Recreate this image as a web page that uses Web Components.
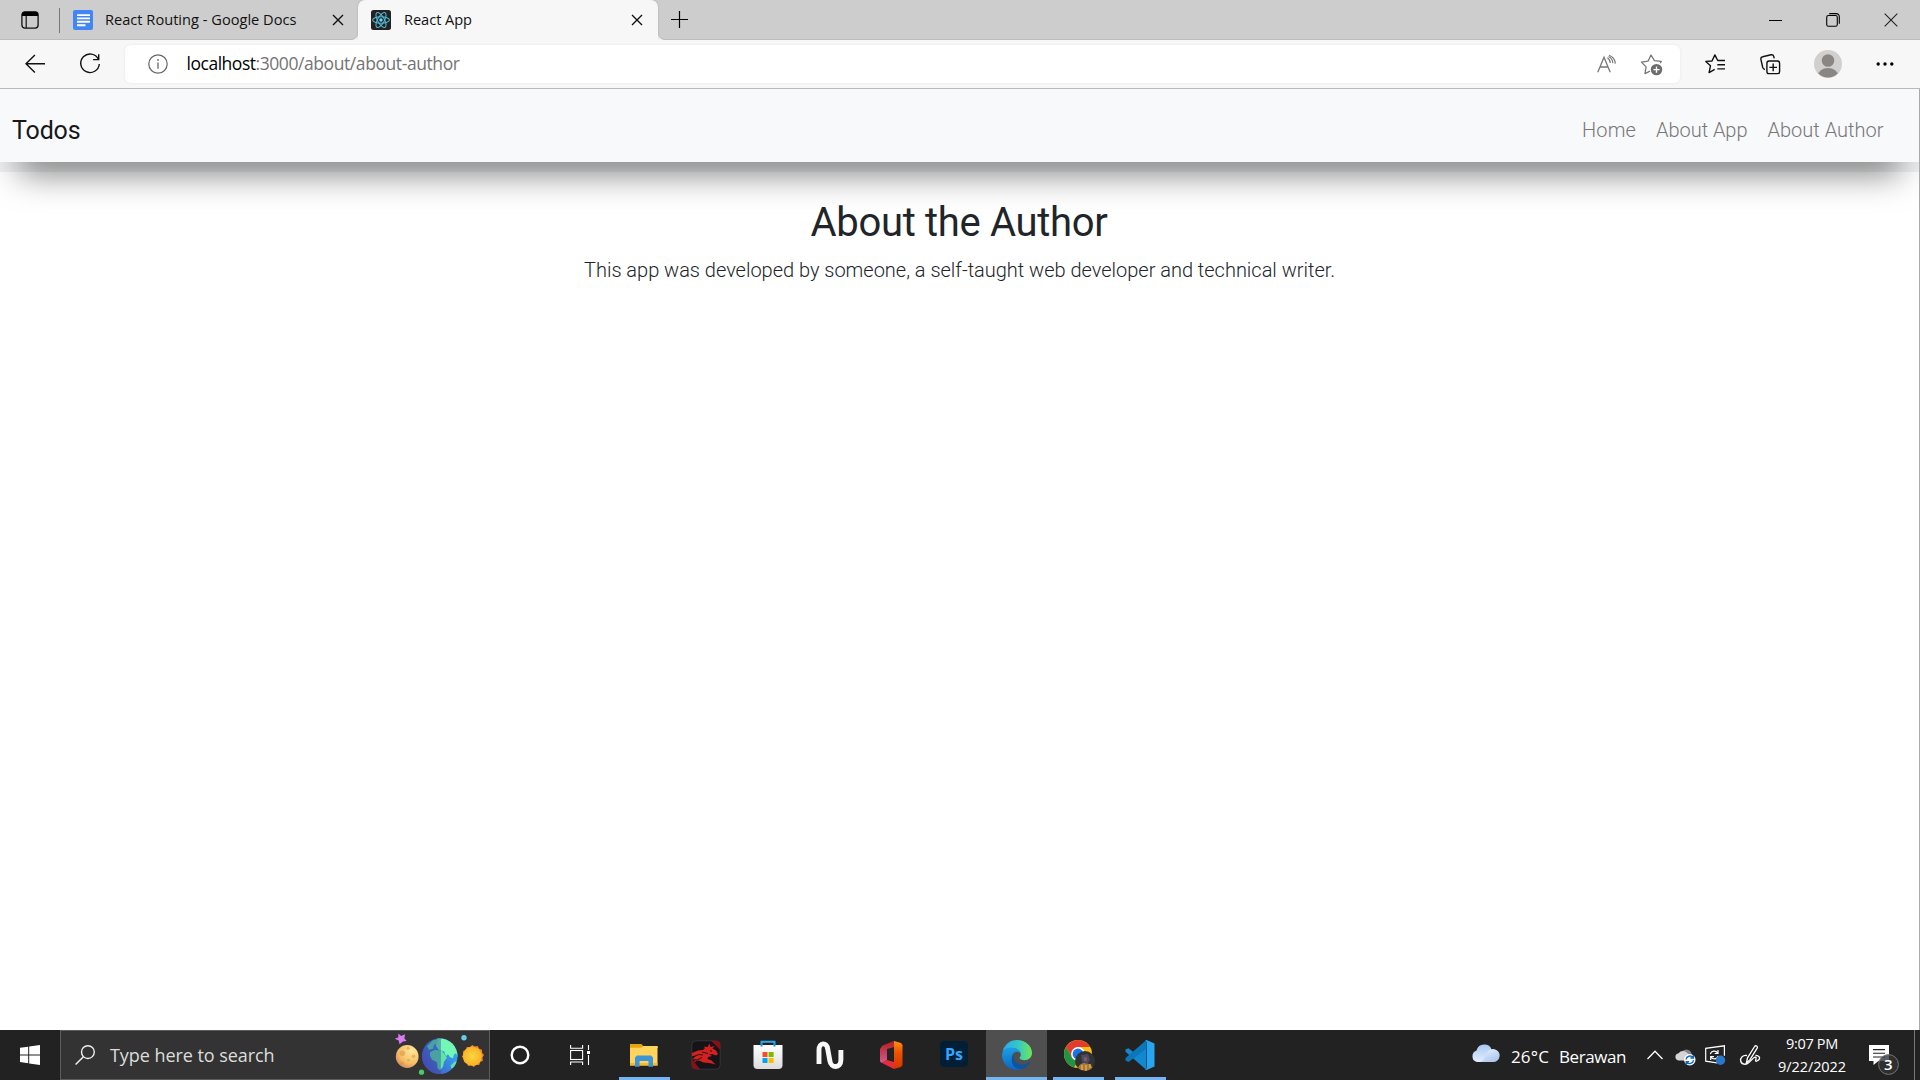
<!DOCTYPE html>
<html lang="en">
<head>
<meta charset="utf-8">
<title>React App</title>
<style>
html,body{margin:0;padding:0;height:100%;overflow:hidden;background:#fff}
</style>
</head>
<body>
<desktop-screen>
  <browser-window slot="window">
    <todo-navbar brand="Todos">
      <fit-text w="54">Home</fit-text>
      <fit-text w="91.5">About App</fit-text>
      <fit-text w="116">About Author</fit-text>
    </todo-navbar>
    <about-page>
      <span slot="title">About the Author</span>
      <span slot="text">This app was developed by someone, a self-taught web developer and technical writer.</span>
    </about-page>
  </browser-window>
  <task-bar slot="taskbar"></task-bar>
</desktop-screen>
<script>
const ICONS = {
tabs:[18,18,`<rect x=".9" y=".9" width="16.2" height="16.2" rx="3" fill="none" stroke="#111" stroke-width="1.3"/><path d="M1 5V3.6A2.8 2.8 0 0 1 3.8.8h10.4A2.8 2.8 0 0 1 17 3.6V5z" fill="#000"/><path d="M5.2 5v12" stroke="#111" stroke-width="1.2"/>`],
docs:[20,20,`<rect width="20" height="20" rx="2" fill="#4285f4"/><path d="M4 5.1h13M4 8.4h13M4 11.8h13M4 15.2h8.5" stroke="#fff" stroke-width="1.9"/>`],
react:[20,20,`<rect width="20" height="20" rx="2.5" fill="#222"/><g fill="none" stroke="#53b9d5" stroke-width="1.05"><ellipse cx="10" cy="10" rx="8.4" ry="3.3"/><ellipse cx="10" cy="10" rx="8.4" ry="3.3" transform="rotate(60 10 10)"/><ellipse cx="10" cy="10" rx="8.4" ry="3.3" transform="rotate(120 10 10)"/></g><circle cx="10" cy="10" r="1.7" fill="#61dafb"/>`],
x:[12,12,`<path d="M1 1l10 10M11 1L1 11" stroke="#111" stroke-width="1.4"/>`],
plus:[18,18,`<path d="M8.5 0v17M0 8.5h17" stroke="#000" stroke-width="1.2"/>`],
min:[13,13,`<path d="M0 6.5h13" stroke="#000" stroke-width="1"/>`],
max:[14,14,`<rect x=".7" y="2.5" width="10.6" height="10.8" rx="1.8" fill="none" stroke="#000" stroke-width="1.1"/><path d="M3.2.6h7A3 3 0 0 1 13.3 3.6v7.2" fill="none" stroke="#000" stroke-width="1.1"/>`],
close:[14,14,`<path d="M.7.7l12.6 12.6M13.3.7L.7 13.3" stroke="#222" stroke-width="1.1"/>`],
back:[20,20,`<path d="M20 9.7H1M9.9 .9L1 9.7l8.9 8.8" fill="none" stroke="#111" stroke-width="1.4"/>`],
reload:[20,20,`<path d="M18.4 5.2A9.3 9.3 0 1 0 19.3 10" fill="none" stroke="#111" stroke-width="1.4"/><path d="M18.7.2v5.4h-5.6" fill="none" stroke="#111" stroke-width="1.4"/>`],
info:[20,20,`<circle cx="10" cy="10" r="9.2" fill="none" stroke="#666" stroke-width="1.2"/><path d="M10 8.4v6.4" stroke="#666" stroke-width="1.3"/><circle cx="10" cy="5.9" r=".9" fill="#666"/>`],
read:[20,20,`<path d="M.8 18.2L7 3.2l6.2 15M2.8 13h8.4" fill="none" stroke="#777" stroke-width="1.3"/><path d="M10.4 3.8a6.500 6.500 0 0 1 2.900 5.300M12 1.200a9.500 9.500 0 0 1 6.300 8.400" fill="none" stroke="#777" stroke-width="1.200"/><path d="M11.500 2.600a8 8 0 0 1 4.400 6.700" fill="none" stroke="#777" stroke-width="1.100"/>`],
addstar:[23,22,`<path d="M20.3 9.1l1-1.8-6.9-.7L11 1 8 7.2 1.4 8.1l4.7 4.8-1.1 6.8 5-2.6" fill="none" stroke="#777" stroke-width="1.3" stroke-linejoin="round"/><circle cx="16.5" cy="15.6" r="5.7" fill="#6c6c6c"/><path d="M16.5 12.5v6.2M13.4 15.6h6.2" stroke="#fff" stroke-width="1.4"/>`],
fav:[21,20,`<path d="M20 6.5h-7.3L9.9.9 7 7 .8 7.4l4.7 4.3-1.4 6.9 5.6-3.3" fill="none" stroke="#111" stroke-width="1.4" stroke-linejoin="round"/><path d="M12.3 10.7H20M12.3 14.9H20" stroke="#111" stroke-width="1.4"/>`],
coll:[21,21,`<rect x="6.9" y="7" width="12.7" height="12.6" rx="2.2" fill="none" stroke="#111" stroke-width="1.4"/><path d="M13.2 9.6v7.6M9.4 13.4H17M4.9 15.5A3 3 0 0 1 2.6 13L.9 5.3a2.3 2.3 0 0 1 1.8-2.5L11 .8a2.4 2.4 0 0 1 2.8 1.8l.4 1.8" fill="none" stroke="#111" stroke-width="1.4"/>`],
avatar:[28,28,`<defs><clipPath id="c"><circle cx="14" cy="14" r="13.6"/></clipPath></defs><circle cx="14" cy="14" r="14" fill="#d2d0ce"/><circle cx="14" cy="10.5" r="6.3" fill="#8a8683"/><ellipse cx="14" cy="26" rx="10.2" ry="8" fill="#8a8683" clip-path="url(#c)"/>`],
dots:[18,4,`<circle cx="2.2" cy="2" r="1.7"/><circle cx="9" cy="2" r="1.7"/><circle cx="15.8" cy="2" r="1.7"/>`],
win:[20,20,`<path d="M0 2.8L8.2 1.7v7.7H0zM9.2 1.5L20 0v9.4H9.2zM0 10.4h8.2v7.8L0 17.1zM9.2 10.4H20V20L9.2 18.4z" fill="#fff"/>`],
search:[20,20,`<circle cx="12.9" cy="7.1" r="6.4" fill="none" stroke="#eee" stroke-width="1.4"/><path d="M8.4 11.7L.6 19.5" stroke="#eee" stroke-width="1.5"/>`],
planets:[92,44,`<defs><radialGradient id="m" cx=".7" cy=".25" r=".95"><stop offset="0" stop-color="#ffe79b"/><stop offset=".6" stop-color="#f5bd62"/><stop offset="1" stop-color="#c9706a"/></radialGradient><linearGradient id="e" x1=".1" y1=".9" x2="1" y2=".3"><stop offset="0" stop-color="#5a4dc0"/><stop offset=".45" stop-color="#3c78d8"/><stop offset="1" stop-color="#31b0f8"/></linearGradient><radialGradient id="s"><stop offset="0" stop-color="#fcd53f"/><stop offset="1" stop-color="#f7b325"/></radialGradient><clipPath id="g"><circle cx="45.7" cy="26" r="17.8"/></clipPath></defs>
<g transform="translate(0 -2.8)"><path d="M4.2 3.2l3 2.7L11 4l-.6 4.200 2.200 2.600-3.700.4L5.500 14 4.700 10.300.8 8.600l3.700-1.500z" fill="#dc7cf5"/>
<circle cx="13.200" cy="26.300" r="11.400" fill="url(#m)"/><g fill="#d99545" opacity=".55"><circle cx="8.400" cy="23" r="2.700"/><circle cx="14" cy="18" r="1.500"/><circle cx="19.500" cy="26" r="1.800"/><circle cx="14.500" cy="30" r="1.300"/><circle cx="8" cy="33" r="2"/></g>
<circle cx="45.700" cy="26" r="17.800" fill="url(#e)"/><g clip-path="url(#g)"><path d="M43 7h12l12 10v12l-3-2-2-4-2 1-1 4-3-1-2-3-2 2-2-5-5-1-3-4z" fill="#72f7b4"/><path d="M33 16l6-6 5-.5-1 4-3 1-1 4-4 1zM36 22l5-2.500 7 1 3 4 2 3-3 4-1 5-3 3.500-2.500-2-.5-6-5-2.500-2-4z" fill="#5fe3a6"/><path d="M57 35l4-4 3 1-3 5-4 1z" fill="#62dfb0"/><path d="M46.900 6H25v42h21.900z" fill="#30459c" opacity=".42"/></g>
<path d="M78.300 14.800l2.500 1.600 3-.6 1.300 2.700 2.900 1 0 3 2 2.400-1.600 2.600.5 3-2.700 1.300-1 2.900-3 0-2.400 2-2.600-1.600-3 .6-1.300-2.800-2.900-1-.1-3-2-2.400 1.700-2.500-.6-3 2.800-1.400 1-2.800 3-.1z" fill="#f48526"/><circle cx="78.300" cy="26" r="9.500" fill="url(#s)"/>
<circle cx="70" cy="7.500" r="2.700" fill="#62cfe8"/><circle cx="27.500" cy="42" r="2.600" fill="#47cc68"/></g>`],
cortana:[20,20,`<circle cx="10" cy="10" r="8.3" fill="none" stroke="#fff" stroke-width="2.4"/>`],
taskview:[20,20,`<g fill="none" stroke="#fff" stroke-width="1.1"><rect x=".6" y="5.5" width="12" height="9"/><path d="M.6 0v3.2h12V0M.6 20v-3h12v3M18.5 0v5M18.5 10v10"/></g><rect x="17" y="6" width="3" height="3" fill="#fff"/>`],
folder:[28,24,`<path d="M0 1h11.500l2 2.500H28V5H0z" fill="#e6a40c"/><path d="M0 4.700h11l2.500-1.700H27.500V22.500H0z" fill="#ffd45d"/><path d="M0 20h27.500v2.500H0z" fill="#f4b92e"/><path d="M5 23.800V14.500l2-2h14l2 2v9.300h-4.500V18h-9v5.800z" fill="#3d94d8"/>`],
dragon:[30,30,`<rect x=".8" y=".8" width="28.400" height="28.400" rx="4" fill="#141416" stroke="#35353a"/><path d="M20 .8h5.200a4 4 0 0 1 4 4V10zM.8 19v6.200a4 4 0 0 0 4 4H9z" fill="#88101c"/><path d="M1 13l6-2.500 5-.5 2-2-1.500-1.500 4 .5 2-3.500 1 3.500 4-1-2 2.500 3.500 2 2 3.500-2 1.500-4-1.500-3 .5 3 1.500-4 1-.5 2 4 1.500 4 4-6-1.500-6-.5-4.500-2-6 1.500 4-3-5 .5 4-3.500-4 .5z" fill="#d4201f"/><path d="M1 17l7-2.500 4 .5M5 20.500l6-3M11 12l6 1.500M19 10.500l2 .8" stroke="#141416" fill="none" stroke-width=".9"/>`],
store:[30,30,`<defs><linearGradient id="t" x2="0" y2="1"><stop stop-color="#fff"/><stop offset="1" stop-color="#dcdcdc"/></linearGradient></defs><path d="M8.500 7V1.800h13V7" fill="none" stroke="#29aef0" stroke-width="1.900"/><path d="M.5 5h29v20a4 4 0 0 1-4 4h-21a4 4 0 0 1-4-4z" fill="url(#t)"/><path d="M8.500 3v3.500M21.500 3v3.500" stroke="#168dd5" stroke-width="1.900"/><path d="M9.500 12h5v5h-5z" fill="#f25022"/><path d="M15.600 12h5v5h-5z" fill="#7fba00"/><path d="M9.500 18h5v5h-5z" fill="#00a4ef"/><path d="M15.600 18h5v5h-5z" fill="#ffb900"/>`],
nn:[28,28,`<path d="M3 23V9C3 1 11 1 11.700 8l2.200 12c1 7.500 11 7.500 11-1V9" fill="none" stroke="#f8f8f8" stroke-width="4.900"/>`],
office:[24,28,`<defs><linearGradient id="o" x2="0" y2="1"><stop stop-color="#ff9314"/><stop offset=".4" stop-color="#ed5400"/><stop offset="1" stop-color="#d63300"/></linearGradient><linearGradient id="q" x2="0" y2="1"><stop stop-color="#b41e1c"/><stop offset="1" stop-color="#d45a92"/></linearGradient></defs><path d="M14 0l7 2 1.500 2v20l-1.500 2-7 2z" fill="url(#o)"/><path d="M14 0v6L7 8v11l-5 3L0 20.500V8l2.500-3.500z" fill="url(#q)"/><path d="M2 22l5-3 7 2v7z" fill="#e72b3c"/>`],
ps:[28,26,`<rect width="28" height="26" rx="4.500" fill="#001e36"/>`],
edge:[30,30,`<defs><linearGradient id="ea" x1="0" x2="1"><stop stop-color="#2ba7e8"/><stop offset=".5" stop-color="#31c6cc"/><stop offset="1" stop-color="#70e755"/></linearGradient><linearGradient id="eb" x2="0" y2="1"><stop stop-color="#1c9ee2"/><stop offset="1" stop-color="#0c67c2"/></linearGradient></defs><path d="M.6 12C2 4.500 8 0 15 0c8.500 0 15 6 15 13 0 4.500-3.500 7.200-7.500 7.200-3 0-5-1-5-2.200 0-.8 1.300-1.400 1.300-3.500C18.800 11 15 8 10 8 6 8 2 9.500.6 12z" fill="url(#ea)"/><path d="M0 15c0-4.500 4-7.200 9.500-7.200 5 0 8.700 2.500 9.200 6-1-1.500-2.500-2.200-4-2-4 .4-5.500 5-4.500 9 1.100 4.700 4.800 8 9.300 8.400-1 .5-2.500.8-4.500.8C6.500 30 0 23.500 0 15z" fill="url(#eb)"/><path d="M12.200 14c-2.400 6.500 3 10.500 8.300 10.500 3.500 0 5-1.500 7-2.500.6-.2.900.3.500.8-2.500 3.700-5.500 6-9.500 6.500-5.500-.2-9-5-8.800-9.600.1-2.500 1-4.500 2.500-5.700z" fill="#1053a2"/>`],
chrome:[29,30,`<circle cx="14" cy="14" r="14" fill="#fbc116"/><path d="M1.900 7A14 14 0 0 1 26.100 7H14L8 17.500z" fill="#e33b2e"/><path d="M1.900 7L8 17.500l6 3.500-4 6.400A14 14 0 0 1 1.900 7z" fill="#229342"/><circle cx="14" cy="14" r="6.900" fill="#fff"/><circle cx="14" cy="14" r="5.400" fill="#1a73e8"/><circle cx="21" cy="21" r="10" fill="#333233"/><path d="M14 28c2-5 5-5 7-5s6 1 7.500 4.500A10 10 0 0 1 14 28z" fill="#a87839"/><path d="M17 15l7-1 2 6-3 4-5-2z" fill="#4a4b62"/><path d="M20 17l3 1-.5 3-2 0z" fill="#8b625b"/><path d="M18 25v5M22 25v6M26 24v4" stroke="#e0b34f" stroke-width="1.300"/>`],
vscode:[30,30,`<path d="M21.500 0L9 12.500 3.500 8.200.5 9.500v2.300L21.500 30z" fill="#1488cf"/><path d="M.5 20.500v-2.400L21.500 0v8.500L3.500 22z" fill="#0b76b9"/><path d="M21.500 0l8 3.500v23l-8 3.500-1.500-1c1 .2 2-.3 2-1.500V2.500C22 1.300 21 .8 20 1z" fill="#28a5f0"/>`],
cloud:[28,19,`<defs><linearGradient id="k" x2="0" y2="1"><stop stop-color="#a9c9f4"/><stop offset="1" stop-color="#e4eefc"/></linearGradient><linearGradient id="k2" x2=".7" y2="1"><stop stop-color="#f1f6fe"/><stop offset="1" stop-color="#a9c5ed"/></linearGradient></defs><path d="M6 18a6 6 0 0 1-.5-11.500A8 8 0 0 1 20.800 6 6.200 6.200 0 0 1 22 18z" fill="url(#k)"/><path d="M8 18c5 0 5.500-5 8-8.500a6.500 6.500 0 1 1 6 8.500z" fill="url(#k2)"/>`],
chev:[16,10,`<path d="M.5 9L8 1.200 15.500 9" fill="none" stroke="#fff" stroke-width="1.300"/>`],
drive:[21,19,`<path d="M6 7a5.500 5.500 0 0 1 10-2l2 7H9z" fill="#858585"/><path d="M3.500 13.500a3.700 3.700 0 0 1 0-7.300A6 6 0 0 1 11 5l5 4-3 4.500z" fill="#d4d4d4"/><circle cx="14.800" cy="12.800" r="5.700" fill="#fff"/><path d="M11 12.500a4 4 0 0 1 7-2M18.600 13.200a4 4 0 0 1-7 2M18.400 8v3h-3M11.200 17.700v-3h3" fill="none" stroke="#1769b5" stroke-width="1.400"/>`],
display:[21,20,`<path d="M12 17.800L.7 16.200V3.300L19.400.8v10" fill="none" stroke="#fff" stroke-width="1.200"/><path d="M5.300 9.200c1-3.500 5.500-4.200 7.400-1M13.200 11c-1 3.300-5.200 4-7.200 1M13 5v3.500H9.700M5.700 15v-3.400h3.200" fill="none" stroke="#fff" stroke-width="1.200"/><circle cx="15.500" cy="15.200" r="4.700" fill="#2b79c9"/>`],
pen:[21,21,`<g fill="none" stroke="#fff" stroke-width="1.300"><path d="M7.500 12.800L14.600 1.500a1.500 1.500 0 0 1 2.600 1.600L10 14.600l-3.700 3.700z"/><path d="M7 10.500C3 9.500 0 13 .7 16c.8 4 5.500 4 8.200 1.500l4.500-4.400c1.800-1.800 3.300-1 2.500 1.200-.7 2-.3 2.500 1.500 1.500 3-1.700 3.500-5-2-5.500"/></g>`],
notif:[30,30,`<path d="M0 0h20v16H9.500L4.500 20v-4H0z" fill="#fff"/><path d="M4 4.600h12M4 8.300h12M4 12h12" stroke="#222" stroke-width="1.100"/><circle cx="19.500" cy="19.500" r="9.900" fill="#333c" stroke="#777" stroke-width="1"/>`]
};
const define = (name, html, after) => customElements.define(name, class extends HTMLElement {
  constructor(){ super(); this.attachShadow({mode:'open'}); }
  connectedCallback(){
    if(this.ready) return; this.ready = true;
    const t = document.createElement('template');
    t.innerHTML = typeof html === 'function' ? html(this) : html;
    this.shadowRoot.append(t.content.cloneNode(true));
    if(after) after(this);
  }
});
define('ui-icon', el => {
  const [w,h,body] = ICONS[el.getAttribute('name')];
  return `<style>:host{display:block;flex:none;width:${w}px;height:${h}px}svg{display:block;overflow:visible}</style><svg width="${w}" height="${h}" viewBox="0 0 ${w} ${h}">${body}</svg>`;
});
define('desktop-screen', `<style>:host{display:flex;flex-direction:column;width:1920px;height:1080px;overflow:hidden}
::slotted([slot=window]){flex:1;min-height:0}</style><slot name="window"></slot><slot name="taskbar"></slot>`);
define('tab-strip', `<style>
:host{display:flex;height:40px;background:#f7f7f7;font:14.6px "Open Sans","Noto Sans",sans-serif;color:#111}
div{display:flex;align-items:center;box-sizing:border-box}
.l{width:358px;background:#cdcdcd;border-radius:0 0 7px 0;padding-left:21px;box-shadow:inset 0 -1px #bdbdbd}
.sep{width:1px;height:25px;background:#777;margin:0 13px 0 20px}
.wrap{width:300px;background:linear-gradient(#cdcdcd 20px,#f7f7f7 20px)}
.tab{width:100%;height:40px;background:#f7f7f7;border-radius:7px 7px 0 0;padding-left:13px;box-shadow:0 0 2px #0003;clip-path:inset(0 -2px 0 -2px)}
.r{flex:1;background:#cdcdcd;border-radius:0 0 0 7px;padding:0 22px 0 13px;box-shadow:inset 0 -1px #bdbdbd}
.grow{flex:1} fit-text{margin-left:12px;margin-bottom:2px}
</style>
<div class="l"><ui-icon name="tabs"></ui-icon><span class="sep"></span><ui-icon name="docs"></ui-icon><fit-text w="191.5">React Routing - Google Docs</fit-text><ui-icon name="x" style="margin-left:35px"></ui-icon></div>
<div class="wrap"><div class="tab"><ui-icon name="react"></ui-icon><fit-text w="68" style="margin-left:13px">React App</fit-text><ui-icon name="x" style="margin-left:159px"></ui-icon></div></div>
<div class="r"><ui-icon name="plus"></ui-icon><span class="grow"></span><ui-icon name="min"></ui-icon><ui-icon name="max" style="margin-left:44px"></ui-icon><ui-icon name="close" style="margin-left:44px"></ui-icon></div>`);
define('tool-bar', `<style>
:host{display:flex;align-items:center;height:49px;box-sizing:border-box;border-bottom:1px solid #b9b9b9;background:#f7f7f7;padding:0 25px 0 25px}
.addr{display:flex;align-items:center;box-sizing:border-box;width:1555px;height:38px;margin:-1px 0 0 25px;padding:0 17px 0 22.5px;background:#fff;border-radius:6px;box-shadow:0 0 3px #0001;font:17.5px "Open Sans","Noto Sans",sans-serif;color:#747474}
.grow{flex:1}
</style>
<ui-icon name="back" style="margin-left:-.5px"></ui-icon><ui-icon name="reload" style="margin-left:35.5px"></ui-icon>
<div class="addr"><ui-icon name="info"></ui-icon><fit-text w="69" style="margin:0 0 1px 19px;color:#000">localhost</fit-text><fit-text w="204" style="margin-bottom:1px">:3000/about/about-author</fit-text><span class="grow"></span><ui-icon name="read"></ui-icon><ui-icon name="addstar" style="margin:2px 0 0 23.5px"></ui-icon></div>
<ui-icon name="fav" style="margin-left:25px"></ui-icon><ui-icon name="coll" style="margin-left:34px"></ui-icon><ui-icon name="avatar" style="margin-left:33px"></ui-icon><ui-icon name="dots" style="margin-left:34px"></ui-icon>`);
define('browser-window', `<style>:host{display:flex;flex-direction:column;background:#fff}
.page{flex:1;border-right:1px solid #aaa;overflow:hidden}</style><tab-strip></tab-strip><tool-bar></tool-bar><div class="page"><slot></slot></div>`);
define('todo-navbar', el => `<style>
:host{display:block}
nav{display:flex;align-items:center;justify-content:space-between;height:73px;box-sizing:border-box;padding:9px 35.5px 0 12px;background:#f8f9fb;box-shadow:0 30px 34px -19px rgba(0,0,0,.52),0 10px 0 rgba(0,10,30,.06);font:300 20px Roboto,sans-serif;color:#777}
.brand{font-size:25px;font-weight:400;color:#181818;margin-top:1px}.links{display:flex;gap:20px}
</style><nav><fit-text class="brand" w="68.5">${el.getAttribute('brand')}</fit-text><div class="links"><slot></slot></div></nav>`);
define('about-page', el => `<style>
:host{display:flex;flex-direction:column;align-items:center;padding-top:37px;font:300 20px/30px Roboto,sans-serif;color:#212529}
.h{font-size:40px;line-height:48px;font-weight:400;margin:0 1px 8px 0}
</style><fit-text class="h" w="297">${el.querySelector('[slot=title]').textContent}</fit-text><fit-text w="751">${el.querySelector('[slot=text]').textContent}</fit-text>`);
define('task-button', el => `<style>
:host{display:flex;flex:none;align-items:center;justify-content:center;position:relative;width:62px;height:50px}
:host([active]){background:#4f4f4f}
:host([running])::after{content:"";position:absolute;bottom:0;left:6px;right:5px;height:3px;background:#76b5ef}
:host([active])::after{left:0;right:0}
b{position:absolute;font:700 16px/24px "Open Sans",sans-serif;color:#31a8ff}
</style><ui-icon name="${el.getAttribute('icon')}"></ui-icon>${el.hasAttribute('label')?`<b>${el.getAttribute('label')}</b>`:''}`);
define('task-bar', `<style>
:host{display:flex;align-items:center;height:50px;background:#222;color:#fff;font:17px "Open Sans","Noto Sans",sans-serif}
.s{display:flex;align-items:center;box-sizing:border-box;width:430px;height:50px;background:#333;border:1px solid #5c5c5c;padding:0 3px 0 14px;font-size:18px;color:#ddd}
.grow{flex:1}.clock{display:flex;flex-direction:column;align-items:center;width:70px;font-size:14.5px;line-height:23px;margin:0 22px 0 16px}
.n{position:relative}.n b{position:absolute;left:15px;top:18px;font:600 15px/22px "Open Sans",sans-serif}
.end{width:1px;height:50px;background:#777;margin:0 5px 0 15px}
</style>
<task-button icon="win" style="width:60px"></task-button>
<div class="s"><ui-icon name="search"></ui-icon><fit-text w="164.5" style="margin:0 0 1px 15px">Type here to search</fit-text><span class="grow"></span><ui-icon name="planets"></ui-icon></div>
<task-button icon="cortana" style="width:60px"></task-button><task-button icon="taskview" style="width:60px;margin-right:3px"></task-button>
<task-button icon="folder" running></task-button><task-button icon="dragon"></task-button><task-button icon="store"></task-button><task-button icon="nn"></task-button><task-button icon="office"></task-button><task-button icon="ps" label="Ps" style="height:46px;margin-bottom:2px"></task-button><task-button icon="edge" active running style="margin-left:1px;width:61px"></task-button><task-button icon="chrome" running></task-button><task-button icon="vscode" running></task-button>
<span class="grow"></span>
<ui-icon name="cloud" style="margin-bottom:4px"></ui-icon><fit-text w="38" style="margin-left:12.5px;margin-top:2px">26°C</fit-text><fit-text w="67" style="margin-left:10px;margin-top:2px">Berawan</fit-text>
<ui-icon name="chev" style="margin-left:21px"></ui-icon><ui-icon name="drive" style="margin:2px 0 0 12px"></ui-icon><ui-icon name="display" style="margin-left:9px"></ui-icon><ui-icon name="pen" style="margin-left:14px"></ui-icon>
<div class="clock"><fit-text w="52">9:07 PM</fit-text><fit-text w="68">9/22/2022</fit-text></div>
<div class="n"><ui-icon name="notif" style="margin-top:10px"></ui-icon><b>3</b></div><span class="end"></span>`);
/* One line of text whose tracking is adjusted so that it spans exactly "w" pixels.
   Defined last, so that every surrounding style is already in place when it measures. */
define('fit-text', `<style>:host{display:inline-block;flex:none;white-space:pre}span{display:inline-block}</style><span><slot></slot></span>`, el => {
  const w = +el.getAttribute('w'), span = el.shadowRoot.querySelector('span');
  span.style.letterSpacing = '0px';
  const n = el.textContent.length;
  span.style.letterSpacing = (w - span.getBoundingClientRect().width) / n + 'px';
  el.style.width = w + 'px';
});
</script>
</body>
</html>
